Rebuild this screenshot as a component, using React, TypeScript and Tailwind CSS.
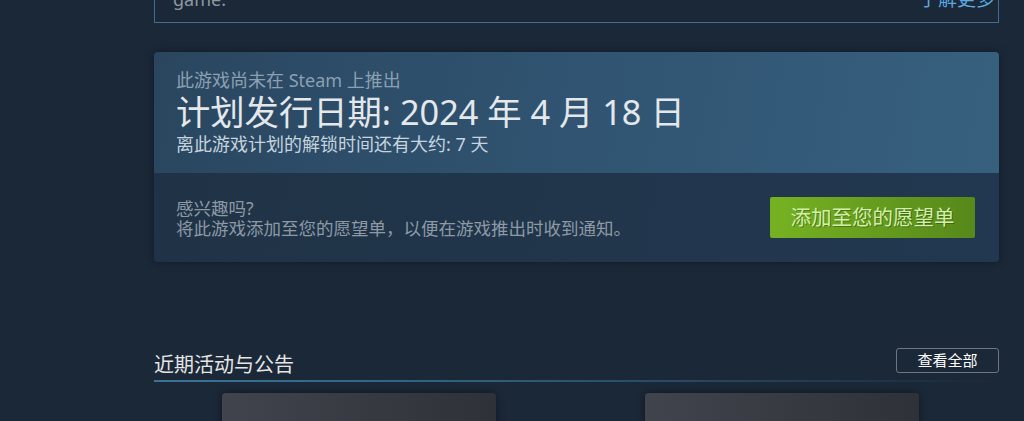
import React from "react";

const font = { fontFamily: '"Noto Sans", "Noto Sans CJK SC", sans-serif' };

export default function App() {
  return (
    <div className="h-[421px] w-[1024px] overflow-hidden bg-[#1b2838]" style={font}>
      <div className="ml-[154px] w-[845px]">
        {/* top bordered box (cut off) */}
        <div className="-mt-[31px] flex items-start justify-between border border-[#3f6c94] pl-[18px] pr-[3px] pt-[17px] pb-[11px]">
          <span className="text-[18px] leading-[24px] text-[#8f98a0]">game.</span>
          <span className="text-[19px] leading-[24px] text-[#5aa9e0]">了解更多</span>
        </div>

        {/* coming soon card */}
        <div className="mt-[29px] overflow-hidden rounded-[4px] shadow-[0_0_8px_rgba(0,0,0,0.35)]">
          <div className="bg-[linear-gradient(100deg,#2a465f_0%,#305472_50%,#37607f_100%)] px-[22px] pt-[16px] pb-[17px]">
            <div className="text-[18px] leading-[24px] text-[#8ba0b3]">此游戏尚未在 Steam 上推出</div>
            <div className="text-[34.3px] leading-[40px] text-[#e4e8eb]">计划发行日期: 2024 年 4 月 18 日</div>
            <div className="text-[18px] leading-[24px] text-[#c6d4df]">离此游戏计划的解锁时间还有大约: 7 天</div>
          </div>
          <div className="flex h-[89px] items-center justify-between bg-[linear-gradient(100deg,#203346_0%,#223850_100%)] pl-[22px] pr-[24px]">
            <div className="text-[17.5px] leading-[20px] text-[#8d9aa6]">
              <div>感兴趣吗?</div>
              <div>将此游戏添加至您的愿望单，以便在游戏推出时收到通知。</div>
            </div>
            <button className="flex h-[41px] w-[205px] items-center justify-center rounded-[2px] bg-[linear-gradient(to_right,#75b022_5%,#588a1b_95%)] text-[20.5px] text-[#d2efa9] [text-shadow:1px_1px_0_rgba(0,0,0,0.3)]">
              添加至您的愿望单
            </button>
          </div>
        </div>

        {/* recent events */}
        <div className="mt-[86px] flex h-[32px] items-start justify-between">
          <div className="mt-[4px] text-[20px] leading-[26px] text-[#e6e6e6]">近期活动与公告</div>
          <button className="flex h-[25px] w-[103px] items-center justify-center rounded-[3px] border border-[#6e7681] text-[15px] leading-none text-white">
            查看全部
          </button>
        </div>
        <div className="h-[2px] bg-[linear-gradient(to_right,#3b7396_0%,#2f5d7a_40%,rgba(27,40,56,0)_100%)]" />

        <div className="mt-[11px] flex gap-[149px] pl-[68px]">
          <div className="h-[60px] w-[274px] rounded-[4px] bg-[linear-gradient(to_right,#41444c,#2f3138)] shadow-[0_0_8px_rgba(0,0,0,0.4)]" />
          <div className="h-[60px] w-[274px] rounded-[4px] bg-[linear-gradient(to_right,#41444c,#2f3138)] shadow-[0_0_8px_rgba(0,0,0,0.4)]" />
        </div>
      </div>
    </div>
  );
}
